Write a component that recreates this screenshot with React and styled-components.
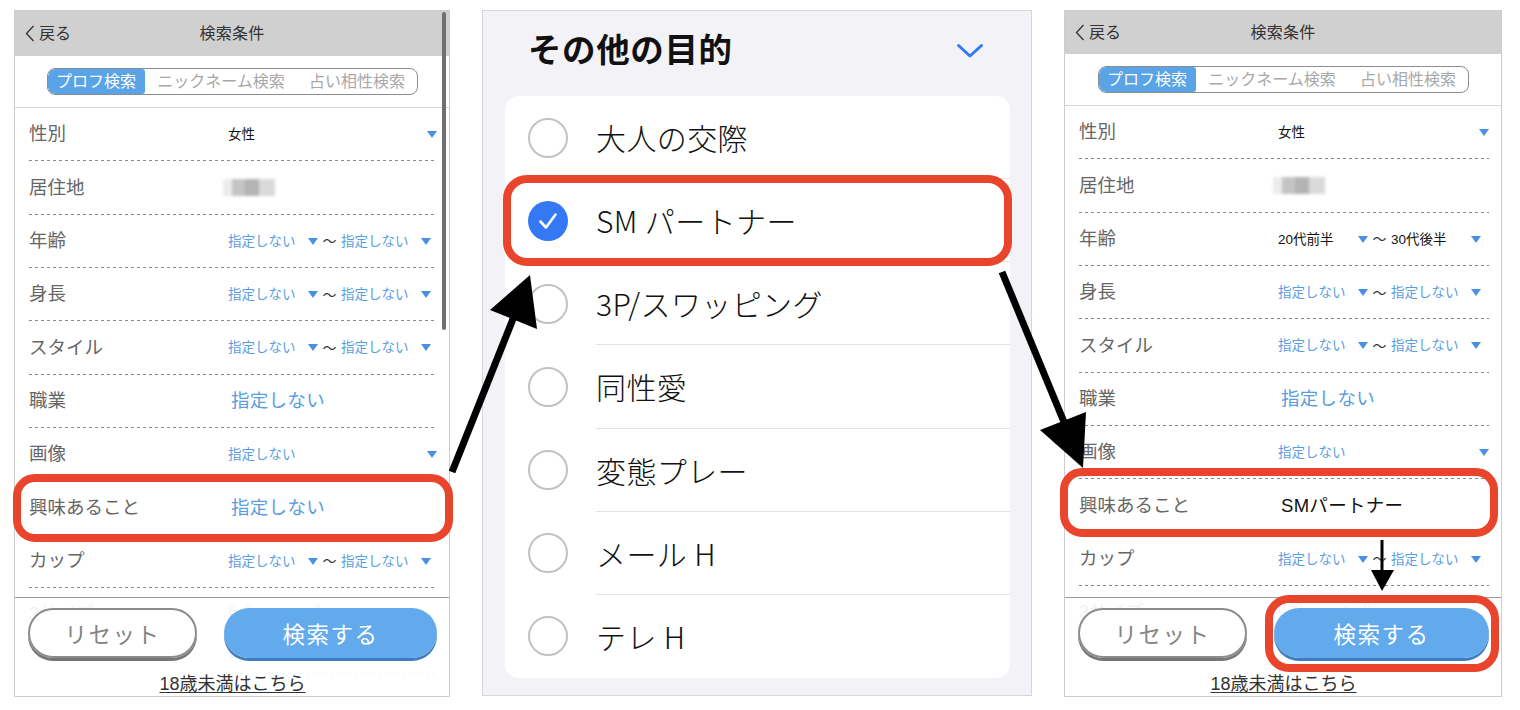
import React from 'react';
import styled, { createGlobalStyle } from 'styled-components';

const FONT = `"Liberation Sans", "Noto Sans CJK JP", sans-serif`;
const CJK = `"Noto Sans CJK JP", "Liberation Sans", sans-serif`;

const GlobalStyle = createGlobalStyle`
  html, body { margin: 0; padding: 0; background: #fff; }
  body { font-family: ${FONT}; color: #222; }
  * { box-sizing: border-box; }
`;

const Page = styled.div`
  position: relative;
  width: 1520px;
  height: 710px;
  padding: 10px 0 0 14px;
  display: flex;
  align-items: flex-start;
  gap: 32px;
  overflow: hidden;
`;

/* ---------- phone search screen ---------- */

const Phone = styled.section`
  position: relative;
  width: ${(p) => p.$width}px;
  height: 687px;
  border: 1px solid #cdcdcd;
  background: #fff;
  display: flex;
  flex-direction: column;
`;

const NavBar = styled.header`
  flex: none;
  height: ${(p) => p.$height}px;
  background: #d0d0d0;
  display: grid;
  grid-template-columns: 1fr auto 1fr;
  align-items: center;
  padding: 0 10px;
  font-size: 16px;
  line-height: 1;
  color: #333;
`;

const BackLink = styled.span`
  justify-self: start;
  display: inline-flex;
  align-items: center;
  gap: 4px;
`;

const NavTitle = styled.span`
  letter-spacing: 0.2px;
`;

const TabsBar = styled.div`
  flex: none;
  height: 52px;
  border-bottom: 1px solid #d6d6d6;
  display: flex;
  align-items: center;
  justify-content: center;
`;

const Segmented = styled.div`
  display: flex;
  height: 27px;
  border: 1px solid #8d8d8d;
  border-radius: 8px;
  overflow: hidden;
`;

const Segment = styled.span`
  width: ${(p) => p.$w}px;
  display: flex;
  align-items: center;
  justify-content: center;
  font-size: 16px;
  line-height: 1;
  white-space: nowrap;
  color: ${(p) => (p.$active ? '#fff' : '#a8a8a8')};
  background: ${(p) => (p.$active ? '#5aa3e6' : 'transparent')};
  border-radius: ${(p) => (p.$active ? '7px 3px 3px 7px' : '0')};
`;

const List = styled.div`
  flex: 1;
  min-height: 0;
  padding: 0 12px 0 14px;
`;

const Row = styled.div`
  position: relative;
  height: 53.33px;
  display: grid;
  grid-template-columns: 199px 1fr;
  align-items: center;
  background: repeating-linear-gradient(90deg, #8a8a8a 0 3px, transparent 3px 6px)
    left bottom / 100% 1px no-repeat;
`;

const GhostRow = styled.div`
  display: grid;
  grid-template-columns: 199px 1fr;
  align-items: start;
  opacity: 0.8;
`;

const Label = styled.span`
  font-size: 18.5px;
  line-height: 1;
  color: #666;
  white-space: nowrap;
`;

const GhostLabel = styled(Label)`
  padding-top: 17px;
`;

const GhostLine = styled.div`
  height: 43px;
  display: flex;
  align-items: center;
  font-size: 14px;
  color: #777;
  white-space: pre;
  background: repeating-linear-gradient(90deg, #9a9a9a 0 3px, transparent 3px 6px)
    left bottom / 100% 1px no-repeat;
`;

const Range = styled.div`
  display: flex;
  align-items: center;
`;

const SelectBox = styled.span`
  display: inline-flex;
  align-items: center;
  justify-content: space-between;
  width: ${(p) => (p.$wide ? '100%' : '90px')};
  font-size: 13.5px;
  line-height: 1;
  white-space: nowrap;
  color: ${(p) => (p.$dark ? '#111' : '#5a9ee2')};
`;

const Caret = styled.i`
  flex: none;
  width: 0;
  height: 0;
  border-left: 5px solid transparent;
  border-right: 5px solid transparent;
  border-top: 7px solid #4a90e2;
`;

const Tilde = styled.span`
  width: 23px;
  text-align: center;
  font-size: 14px;
  line-height: 1;
  color: #333;
`;

const BigValue = styled.span`
  margin-left: 3px;
  font-size: 18.5px;
  line-height: 1;
  letter-spacing: 0.3px;
  white-space: nowrap;
  color: ${(p) => (p.$dark ? '#111' : '#5a9de0')};
`;

const Blurred = styled.span`
  width: 52px;
  height: 17px;
  margin-left: -5px;
  background: linear-gradient(
    90deg,
    #ececec 0 18%,
    #c4c4c4 18% 42%,
    #b4b4b4 42% 70%,
    #dadada 70% 100%
  );
  filter: blur(1.6px);
`;

const Scrollbar = styled.span`
  position: absolute;
  top: 1px;
  right: 3px;
  width: 4px;
  height: 318px;
  border-radius: 2px;
  background: #707070;
  z-index: 2;
`;

const Footer = styled.footer`
  position: absolute;
  left: 0;
  right: 0;
  bottom: 0;
  height: 99px;
  border-top: 1px solid #9a9a9a;
  background: rgba(255, 255, 255, 0.88);
  padding: 10px 12px 0 13px;
  display: flex;
  flex-direction: column;
  z-index: 1;
`;

const ButtonRow = styled.div`
  display: grid;
  grid-template-columns: 169px 1fr;
  gap: 27px;
`;

const PillButton = styled.button`
  position: relative;
  height: 50px;
  border-radius: 26px;
  font-family: ${FONT};
  font-size: 22.5px;
  letter-spacing: 1.5px;
  padding: 0;
  border: ${(p) => (p.$primary ? 'none' : '2px solid #8c8c8c')};
  background: ${(p) => (p.$primary ? 'rgba(90, 165, 234, 0.95)' : 'rgba(255, 255, 255, 0.92)')};
  color: ${(p) => (p.$primary ? '#fff' : '#848484')};
  box-shadow: 0 3px 0 ${(p) => (p.$primary ? '#3f7dbf' : '#777')};
`;

const UnderageLink = styled.a`
  margin-top: 16px;
  text-align: center;
  font-size: 18px;
  line-height: 20px;
  color: #333;
  text-decoration: underline;
  text-underline-offset: 2px;
`;

const Highlight = styled.span`
  position: absolute;
  top: ${(p) => -p.$t}px;
  right: ${(p) => -p.$r}px;
  bottom: ${(p) => -p.$b}px;
  left: ${(p) => -p.$l}px;
  border: 8px solid #e8452c;
  border-radius: ${(p) => p.$radius || 22}px;
  pointer-events: none;
  z-index: 3;
`;

/* ---------- middle: option sheet ---------- */

const Sheet = styled.section`
  width: 550px;
  height: 686px;
  border: 1px solid #d5d5da;
  background: #f2f2f7;
  padding: 0 21px 17px 22px;
  display: flex;
  flex-direction: column;
`;

const SheetHeader = styled.div`
  flex: none;
  height: 85px;
  display: flex;
  align-items: center;
  justify-content: space-between;
  padding: 0 26px 6px 23px;
`;

const SheetTitle = styled.h2`
  margin: 0;
  font-size: 33.5px;
  line-height: 1;
  font-weight: 700;
  letter-spacing: 0.6px;
  color: #111;
`;

const Card = styled.div`
  flex: 1;
  background: #fff;
  border-radius: 14px;
  display: flex;
  flex-direction: column;
`;

const Option = styled.div`
  position: relative;
  flex: 1;
  display: flex;
  align-items: center;
  gap: 28px;
  padding-left: 23px;
`;

const Radio = styled.span`
  flex: none;
  width: 40px;
  height: 40px;
  border-radius: 50%;
  border: ${(p) => (p.$checked ? 'none' : '2.5px solid #c2c2c6')};
  background: ${(p) => (p.$checked ? '#3478f6' : 'transparent')};
  display: flex;
  align-items: center;
  justify-content: center;
`;

const OptionText = styled.span`
  align-self: stretch;
  flex: 1;
  display: flex;
  align-items: center;
  font-family: ${CJK};
  font-size: 30px;
  font-weight: 300;
  line-height: 1;
  letter-spacing: 0.4px;
  color: #111;
  border-bottom: ${(p) => (p.$last ? 'none' : '1px solid #e3e3e8')};
`;

const Annotations = styled.svg`
  position: absolute;
  left: 0;
  top: 0;
  pointer-events: none;
  z-index: 10;
`;

/* ---------- data ---------- */

const NONE = '指定しない';

const leftRows = [
  { label: '性別', type: 'single', text: '女性', dark: true },
  { label: '居住地', type: 'blur' },
  { label: '年齢', type: 'range', from: NONE, to: NONE },
  { label: '身長', type: 'range', from: NONE, to: NONE },
  { label: 'スタイル', type: 'range', from: NONE, to: NONE },
  { label: '職業', type: 'big', text: NONE },
  { label: '画像', type: 'single', text: NONE },
  { label: '興味あること', type: 'big', text: NONE, highlight: { t: 7, r: 16, b: 7, l: 16 } },
  { label: 'カップ', type: 'range', from: NONE, to: NONE },
];

const rightRows = [
  { label: '性別', type: 'single', text: '女性', dark: true },
  { label: '居住地', type: 'blur' },
  { label: '年齢', type: 'range', from: '20代前半', to: '30代後半', dark: true },
  { label: '身長', type: 'range', from: NONE, to: NONE },
  { label: 'スタイル', type: 'range', from: NONE, to: NONE },
  { label: '職業', type: 'big', text: NONE },
  { label: '画像', type: 'single', text: NONE },
  {
    label: '興味あること',
    type: 'big',
    text: 'SMパートナー',
    dark: true,
    highlight: { t: 11, r: 9, b: 4, l: 19 },
  },
  { label: 'カップ', type: 'range', from: NONE, to: NONE },
];

const options = ['大人の交際', 'SM パートナー', '3P/スワッピング', '同性愛', '変態プレー', 'メール H', 'テレ H'];

/* ---------- components ---------- */

function BackChevron() {
  return (
    <svg width="10" height="17" viewBox="0 0 10 17">
      <polyline points="8.5,1 1.5,8.5 8.5,16" fill="none" stroke="#333" strokeWidth="1.3" />
    </svg>
  );
}

function Value({ row }) {
  if (row.type === 'blur') return <Blurred />;
  if (row.type === 'big') return <BigValue $dark={row.dark}>{row.text}</BigValue>;
  if (row.type === 'single')
    return (
      <SelectBox $wide $dark={row.dark}>
        {row.text}
        <Caret />
      </SelectBox>
    );
  return (
    <Range>
      <SelectBox $dark={row.dark}>
        {row.from}
        <Caret />
      </SelectBox>
      <Tilde>〜</Tilde>
      <SelectBox $dark={row.dark}>
        {row.to}
        <Caret />
      </SelectBox>
    </Range>
  );
}

function SearchScreen({ width, navHeight, rows, scrollbar, buttonHighlight }) {
  return (
    <Phone $width={width}>
      <NavBar $height={navHeight}>
        <BackLink>
          <BackChevron />
          戻る
        </BackLink>
        <NavTitle>検索条件</NavTitle>
        <span />
      </NavBar>
      <TabsBar>
        <Segmented>
          <Segment $w={97} $active>
            プロフ検索
          </Segment>
          <Segment $w={153}>ニックネーム検索</Segment>
          <Segment $w={119}>占い相性検索</Segment>
        </Segmented>
      </TabsBar>
      <List>
        {rows.map((row) => (
          <Row key={row.label}>
            <Label>{row.label}</Label>
            <Value row={row} />
            {row.highlight && (
              <Highlight
                $t={row.highlight.t}
                $r={row.highlight.r}
                $b={row.highlight.b}
                $l={row.highlight.l}
              />
            )}
          </Row>
        ))}
        <GhostRow>
          <GhostLabel>3サイズ</GhostLabel>
          <div>
            <GhostLine>{'B  0          〜  0'}</GhostLine>
            <GhostLine>{'W  0          〜  0'}</GhostLine>
          </div>
        </GhostRow>
      </List>
      {scrollbar && <Scrollbar />}
      <Footer>
        <ButtonRow>
          <PillButton>リセット</PillButton>
          <PillButton $primary>
            検索する
            {buttonHighlight && <Highlight $t={13} $r={10} $b={14} $l={9} $radius={24} />}
          </PillButton>
        </ButtonRow>
        <UnderageLink>18歳未満はこちら</UnderageLink>
      </Footer>
    </Phone>
  );
}

function Chevron() {
  return (
    <svg width="28" height="16" viewBox="0 0 28 16">
      <polyline
        points="2.5,2.5 14,13 25.5,2.5"
        fill="none"
        stroke="#3478f6"
        strokeWidth="3"
        strokeLinecap="round"
        strokeLinejoin="round"
      />
    </svg>
  );
}

function Check() {
  return (
    <svg width="40" height="40" viewBox="0 0 40 40">
      <polyline
        points="12.5,20.5 18,26.5 27.5,13.5"
        fill="none"
        stroke="#fff"
        strokeWidth="2.6"
        strokeLinecap="round"
        strokeLinejoin="round"
      />
    </svg>
  );
}

function OptionSheet() {
  return (
    <Sheet>
      <SheetHeader>
        <SheetTitle>その他の目的</SheetTitle>
        <Chevron />
      </SheetHeader>
      <Card>
        {options.map((text, i) => {
          const checked = i === 1;
          return (
            <Option key={text}>
              <Radio $checked={checked}>{checked && <Check />}</Radio>
              <OptionText $last={i === options.length - 1}>{text}</OptionText>
              {checked && <Highlight $t={4} $r={2} $b={4} $l={2} $radius={24} />}
            </Option>
          );
        })}
      </Card>
    </Sheet>
  );
}

export default function App() {
  return (
    <>
      <GlobalStyle />
      <Page>
        <SearchScreen width={436} navHeight={45} rows={leftRows} scrollbar />
        <OptionSheet />
        <SearchScreen width={438} navHeight={43} rows={rightRows} buttonHighlight />
        <Annotations width="1520" height="710" viewBox="0 0 1520 710">
          <line x1="452" y1="472" x2="515" y2="314" stroke="#000" strokeWidth="7" />
          <polygon points="530,275 490,310 537,329" fill="#000" />
          <line x1="1002" y1="272" x2="1064" y2="422" stroke="#000" strokeWidth="7" />
          <polygon points="1083,468 1040,430 1086,412" fill="#000" />
          <line x1="1382" y1="540" x2="1382" y2="574" stroke="#000" strokeWidth="3" />
          <polygon points="1382,591 1371,570 1394,570" fill="#000" />
        </Annotations>
      </Page>
    </>
  );
}
